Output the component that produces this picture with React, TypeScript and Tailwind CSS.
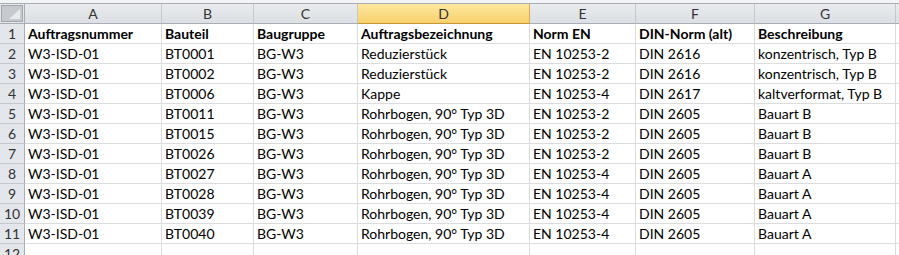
const COLS = [
  { key: 'A', width: 137 },
  { key: 'B', width: 92 },
  { key: 'C', width: 104 },
  { key: 'D', width: 172 },
  { key: 'E', width: 106 },
  { key: 'F', width: 119 },
  { key: 'G', width: 141 },
];

const HEADER = [
  'Auftragsnummer',
  'Bauteil',
  'Baugruppe',
  'Auftragsbezeichnung',
  'Norm EN',
  'DIN-Norm (alt)',
  'Beschreibung',
];

const ROWS: string[][] = [
  ['W3-ISD-01', 'BT0001', 'BG-W3', 'Reduzierstück', 'EN 10253-2', 'DIN 2616', 'konzentrisch, Typ B'],
  ['W3-ISD-01', 'BT0002', 'BG-W3', 'Reduzierstück', 'EN 10253-2', 'DIN 2616', 'konzentrisch, Typ B'],
  ['W3-ISD-01', 'BT0006', 'BG-W3', 'Kappe', 'EN 10253-4', 'DIN 2617', 'kaltverformat, Typ B'],
  ['W3-ISD-01', 'BT0011', 'BG-W3', 'Rohrbogen, 90° Typ 3D', 'EN 10253-2', 'DIN 2605', 'Bauart B'],
  ['W3-ISD-01', 'BT0015', 'BG-W3', 'Rohrbogen, 90° Typ 3D', 'EN 10253-2', 'DIN 2605', 'Bauart B'],
  ['W3-ISD-01', 'BT0026', 'BG-W3', 'Rohrbogen, 90° Typ 3D', 'EN 10253-2', 'DIN 2605', 'Bauart B'],
  ['W3-ISD-01', 'BT0027', 'BG-W3', 'Rohrbogen, 90° Typ 3D', 'EN 10253-4', 'DIN 2605', 'Bauart A'],
  ['W3-ISD-01', 'BT0028', 'BG-W3', 'Rohrbogen, 90° Typ 3D', 'EN 10253-4', 'DIN 2605', 'Bauart A'],
  ['W3-ISD-01', 'BT0039', 'BG-W3', 'Rohrbogen, 90° Typ 3D', 'EN 10253-4', 'DIN 2605', 'Bauart A'],
  ['W3-ISD-01', 'BT0040', 'BG-W3', 'Rohrbogen, 90° Typ 3D', 'EN 10253-4', 'DIN 2605', 'Bauart A'],
];

function Corner() {
  return (
    <div className="flex h-5 w-[25px] shrink-0 items-stretch border-r border-b border-[#a9aeb4] bg-[#e3e6ea] p-[1px]">
      <svg width="22" height="17" viewBox="0 0 22 17" className="block">
        <rect x="0.5" y="0.5" width="21" height="16" fill="#c6c9cd" stroke="#a3a7ac" />
        <polygon points="19,4 19,14 8,14" fill="#e8eaec" />
      </svg>
    </div>
  );
}

function ColHeader({ label, width, active }: { label: string; width: number; active?: boolean }) {
  return (
    <div
      className={`flex h-5 shrink-0 items-center justify-center border-r border-b text-[14px] text-[#333] ${
        active
          ? 'border-r-[#d9a849] border-b-[#c8953a] bg-linear-to-b from-[#fde8a0] to-[#f8d06a]'
          : 'border-r-[#c4c8cd] border-b-[#a9aeb4] bg-linear-to-b from-[#e9ebee] to-[#dcdfe3]'
      }`}
      style={{ width }}
    >
      {label}
    </div>
  );
}

function RowHeader({ n }: { n: number }) {
  return (
    <div className="flex h-5 w-[25px] shrink-0 items-center justify-center border-r border-b border-r-[#a9aeb4] border-b-[#c4c8cd] bg-[#e3e6ea] text-[14px] text-[#333]">
      {n}
    </div>
  );
}

function Cell({ text, width, bold }: { text?: string; width: number; bold?: boolean }) {
  return (
    <div
      className={`flex h-5 shrink-0 items-center overflow-hidden whitespace-nowrap border-r border-b border-[#dadcdd] bg-white pl-[3px] text-[14px] text-black ${
        bold ? 'font-bold' : ''
      }`}
      style={{ width }}
    >
      {text}
    </div>
  );
}

function Row({ n, values, bold }: { n: number; values?: string[]; bold?: boolean }) {
  return (
    <div className="flex">
      <RowHeader n={n} />
      {COLS.map((c, i) => (
        <Cell key={c.key} text={values?.[i]} width={c.width} bold={bold} />
      ))}
      <div className="h-5 flex-1 border-b border-[#dadcdd] bg-white" />
    </div>
  );
}

export default function App() {
  return (
    <div
      className="h-[255px] w-[899px] overflow-hidden bg-white"
      style={{ fontFamily: 'Lato, "Open Sans", sans-serif' }}
    >
      <div className="h-1 border-b border-[#a9aeb4] bg-[#f3f4f6]" />
      <div className="flex">
        <Corner />
        {COLS.map((c) => (
          <ColHeader key={c.key} label={c.key} width={c.width} active={c.key === 'D'} />
        ))}
        <div className="h-5 flex-1 border-b border-[#a9aeb4] bg-linear-to-b from-[#e9ebee] to-[#dcdfe3]" />
      </div>
      <Row n={1} values={HEADER} bold />
      {ROWS.map((r, i) => (
        <Row key={i} n={i + 2} values={r} />
      ))}
      <Row n={12} />
    </div>
  );
}
